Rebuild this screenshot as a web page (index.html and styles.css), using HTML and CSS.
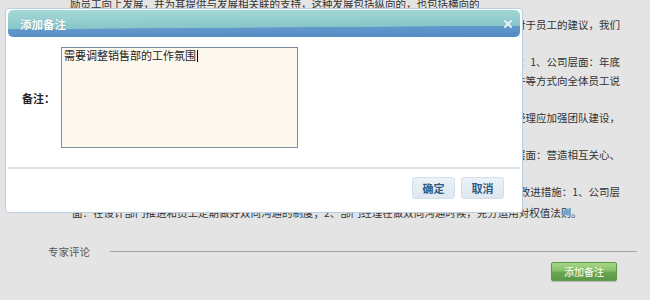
FILE: index.html
```html
<!DOCTYPE html>
<html lang="zh-CN">
<head>
    <meta charset="UTF-8">
    <meta name="viewport" content="width=device-width, initial-scale=1.0">
    <title>添加备注</title>
    <link rel="stylesheet" href="styles.css">
</head>
<body>
    <div class="page">
        <div class="article">
            <p class="ln">励员工向上发展，并为其提供与发展相关联的支持，这种发展包括纵向的，也包括横向的</p>
            <p class="ln tail gap-sm">管理层会认真对待每一条对于员工的建议，我们</p>
            <p class="ln tail gap">针对上述问题提出改进措施：1、公司层面：年底</p>
            <p class="ln tail gap-xs">通过会议、邮件等方式向全体员工说</p>
            <p class="ln tail gap">2、部门层面：部门经理应加强团队建设，</p>
            <p class="ln tail gap">3、员工层面：营造相互关心、</p>
            <p class="ln tail gap">针对沟通问题的改进措施：1、公司层</p>
            <p class="ln last">面：在设计部门推进和员工定期做好双向沟通的制度；2、部门经理在做双向沟通时候，充分运用对权值法则。</p>
        </div>

        <div class="section-title">
            <span>专家评论</span>
            <i class="rule"></i>
        </div>
        <div class="actions">
            <button class="btn-add">添加备注</button>
        </div>
    </div>

    <div class="dialog">
        <div class="dialog-head">
            <span class="dialog-title">添加备注</span>
            <svg class="dialog-close" width="8" height="8" viewBox="0 0 8 8">
                <path d="M1 1 L7 7 M7 1 L1 7" stroke="#e4ecf4" stroke-width="2" stroke-linecap="round"/>
            </svg>
        </div>
        <div class="dialog-body">
            <label class="field-label">备注：</label>
            <div class="note-box">需要调整销售部的工作氛围<span class="caret"></span></div>
        </div>
        <div class="dialog-foot">
            <button class="btn">确定</button>
            <button class="btn">取消</button>
        </div>
    </div>
</body>
</html>
```

FILE: styles.css
```css
body {
    margin: 0;
    padding: 0;
    background: #e4e4e4;
    font-family: "Noto Sans CJK SC", "DejaVu Sans", sans-serif;
    font-size: 10.5px;
    color: #333;
    overflow: hidden;
}
.page {
    position: relative;
    width: 650px;
    height: 300px;
}
.article {
    padding: 0 30px 0 70px;
    margin-top: -5px;
}
.ln {
    margin: 0;
    height: 18px;
    line-height: 18px;
    white-space: nowrap;
}
.tail {
    text-align: right;
}
.gap {
    margin-top: 19px;
}
.gap-sm {
    margin-top: 3px;
}
.gap-xs {
    margin-top: 1px;
}
.last {
    margin-top: 3px;
    padding-left: 2px;
}
.section-title {
    display: flex;
    align-items: center;
    gap: 20px;
    height: 18px;
    margin-top: 20px;
    padding: 0 13px 0 48px;
    color: #555;
}
.rule {
    flex: 1;
    height: 1px;
    background: #a3a3a3;
}
.actions {
    display: flex;
    justify-content: flex-end;
    margin-top: 2px;
    padding-right: 33px;
}
.btn-add {
    width: 66px;
    height: 19px;
    padding: 0;
    font-family: inherit;
    font-size: 10px;
    color: #fff;
    background: linear-gradient(#a8d78a, #86c066 45%, #6aa553 55%, #5d9847);
    border: 1px solid #5f9a4b;
    border-radius: 2px;
    box-shadow: 0 1px 1px rgba(0, 0, 0, 0.2);
}

/* dialog */
.dialog {
    position: absolute;
    left: 5px;
    top: 8px;
    width: 518px;
    height: 205px;
    box-sizing: border-box;
    padding: 1px 2px;
    background: #fff;
    border: 1px solid #bccfe0;
    border-radius: 4px;
}
.dialog-head {
    display: flex;
    align-items: center;
    justify-content: space-between;
    height: 27px;
    padding: 0 8px 0 12px;
    border-radius: 5px;
    background: linear-gradient(179.6deg, #a4dad6 0%, #88c6c9 62%, #6398cc 64%, #5289c2 100%);
}
.dialog-title {
    color: #fff;
    font-weight: bold;
    font-size: 11.5px;
    text-shadow: 0 0 1px rgba(40, 80, 110, 0.5);
}
.dialog-body {
    display: flex;
    align-items: center;
    margin-top: 10px;
    padding-left: 14px;
}
.field-label {
    width: 39px;
    font-size: 11px;
    font-weight: bold;
    color: #222;
}
.note-box {
    width: 237px;
    height: 101px;
    box-sizing: border-box;
    padding: 1px 2px;
    font-size: 11px;
    line-height: 13px;
    color: #222;
    background: #fdf8ee;
    border: 1px solid #7d8d9c;
}
.caret {
    display: inline-block;
    width: 1px;
    height: 12px;
    margin-left: 1px;
    vertical-align: -2px;
    background: #000;
}
.dialog-foot {
    display: flex;
    justify-content: flex-end;
    gap: 6px;
    margin-top: 19px;
    padding: 8px 16px 0 0;
    border-top: 2px solid #dde5ec;
}
.btn {
    width: 43px;
    height: 22px;
    padding: 0;
    font-family: inherit;
    font-size: 11px;
    font-weight: bold;
    color: #2f5a86;
    background: linear-gradient(#ebf2f7, #dee8f0);
    border: 1px solid #d4e0e9;
    border-radius: 3px;
}
```
